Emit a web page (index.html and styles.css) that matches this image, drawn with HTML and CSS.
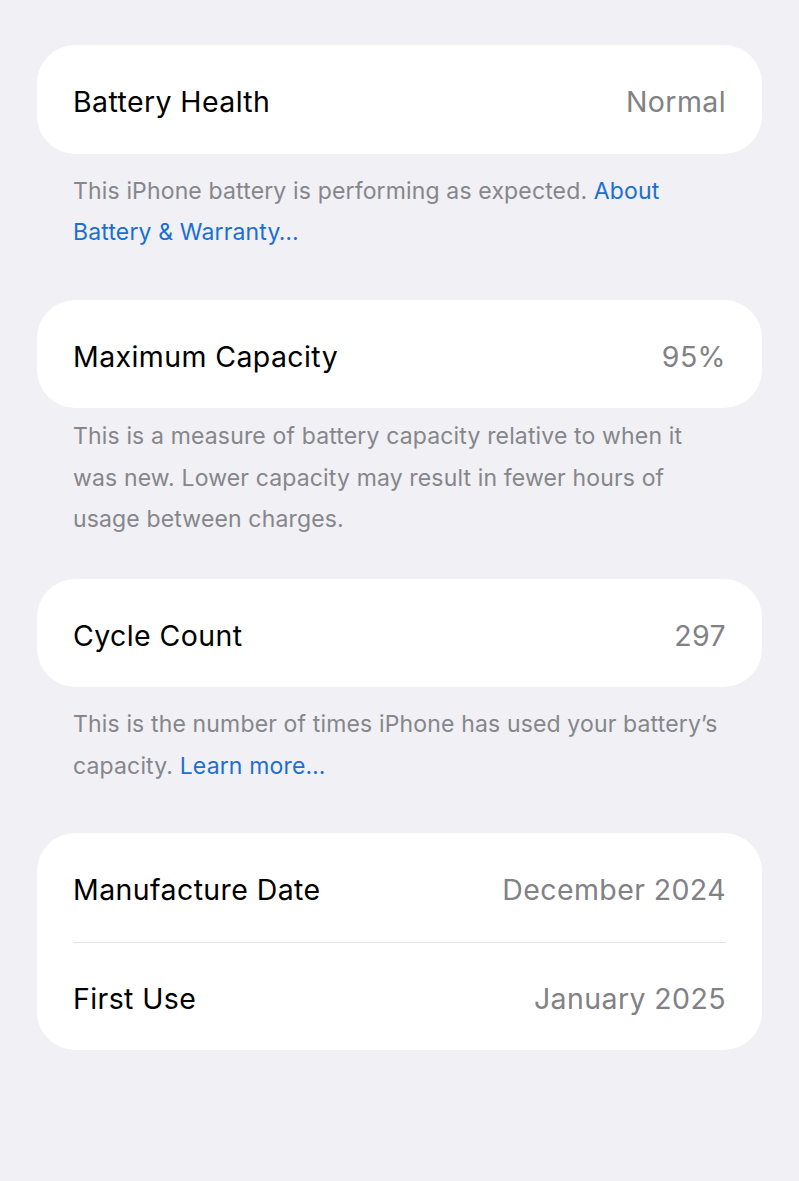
FILE: index.html
```html
<!DOCTYPE html>
<html lang="en">
<head>
    <meta charset="UTF-8">
    <meta name="viewport" content="width=device-width, initial-scale=1.0">
    <title>Battery Health</title>
    <link rel="stylesheet" href="styles.css">
</head>
<body>
    <main class="settings">
        <section class="group">
            <div class="row">
                <span class="row-label">Battery Health</span>
                <span class="row-value">Normal</span>
            </div>
        </section>
        <p class="note">This iPhone battery is performing as expected. <a href="#" class="note-link">About Battery &amp; Warranty…</a></p>

        <section class="group">
            <div class="row">
                <span class="row-label">Maximum Capacity</span>
                <span class="row-value">95%</span>
            </div>
        </section>
        <p class="note tight">This is a measure of battery capacity relative to when it was new. Lower capacity may result in fewer hours of usage between charges.</p>

        <section class="group">
            <div class="row">
                <span class="row-label">Cycle Count</span>
                <span class="row-value">297</span>
            </div>
        </section>
        <p class="note">This is the number of times iPhone has used your battery’s capacity. <a href="#" class="note-link">Learn more…</a></p>

        <section class="group">
            <div class="row">
                <span class="row-label">Manufacture Date</span>
                <span class="row-value">December 2024</span>
            </div>
            <div class="row">
                <span class="row-label">First Use</span>
                <span class="row-value">January 2025</span>
            </div>
        </section>
    </main>
</body>
</html>
```

FILE: styles.css
```css
* {
    margin: 0;
    padding: 0;
    box-sizing: border-box;
}

body {
    background-color: #f0f0f5;
    font-family: Inter, "Noto Sans", "Liberation Sans", sans-serif;
    -webkit-font-smoothing: antialiased;
}

.settings {
    padding: 45px 37px 0;
}

.group {
    background: #fff;
    border-radius: 38px;
}

.row {
    display: flex;
    justify-content: space-between;
    align-items: center;
    height: 108.5px;
    margin: 0 36px;
    padding-top: 5px;
    font-size: 28.5px;
    letter-spacing: 0.4px;
}

.row + .row {
    border-top: 1px solid #e2e2e6;
}

.row-label {
    color: #000;
}

.row-value {
    color: #818186;
}

/* footer text under each group */
.note {
    padding: 17px 44px 46px 36px;
    font-size: 23px;
    line-height: 41.5px;
    letter-spacing: 0.15px;
    color: #86868b;
}

.note.tight {
    padding-top: 8px;
    padding-bottom: 38px;
}

.note-link {
    color: #1a6fd1;
    text-decoration: none;
}
```
